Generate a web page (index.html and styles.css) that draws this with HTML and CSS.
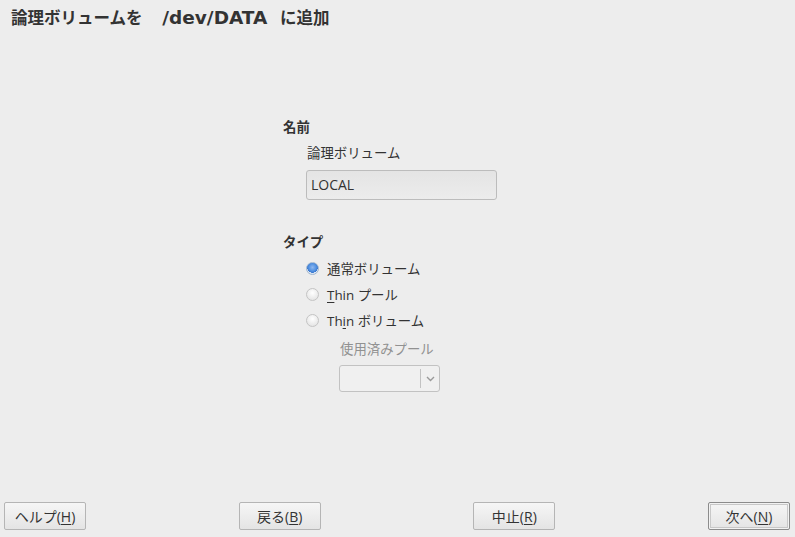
FILE: index.html
```html
<!DOCTYPE html>
<html lang="ja">
<head>
<meta charset="utf-8">
<title>論理ボリュームを /dev/DATA に追加</title>
<link rel="stylesheet" href="styles.css">
</head>
<body>
<div class="page">
  <h1 class="title">論理ボリュームを <span class="path">/dev/DATA</span> に追加</h1>
  <div class="form">
    <div class="section-label">名前</div>
    <div class="sub-label">論理ボリューム</div>
    <div class="text-input">LOCAL</div>
    <div class="section-label type-label">タイプ</div>
    <div class="radios">
      <div class="radio-row"><span class="radio checked"></span><span>通常ボリューム</span></div>
      <div class="radio-row"><span class="radio"></span><span><u>T</u>hin プール</span></div>
      <div class="radio-row"><span class="radio"></span><span>Th<u>i</u>n ボリューム</span></div>
    </div>
    <div class="pool-label">使用済みプール</div>
    <div class="combo"><span class="combo-field"></span><span class="combo-arrow"><svg width="9" height="6" viewBox="0 0 9 6"><path d="M1 1 L4.5 4.5 L8 1" fill="none" stroke="#9a9a9a" stroke-width="1.4"/></svg></span></div>
  </div>
  <div class="footer">
    <button class="btn">ヘルプ(<u>H</u>)</button>
    <button class="btn">戻る(<u>B</u>)</button>
    <button class="btn">中止(<u>R</u>)</button>
    <button class="btn default">次へ(<u>N</u>)</button>
  </div>
</div>
</body>
</html>
```
FILE: styles.css
```css
html, body {
  margin: 0;
  padding: 0;
  background: #ededed;
}
body {
  font-family: "Open Sans", "Noto Sans CJK JP", sans-serif;
  color: #333333;
  font-size: 13.4px;
}
.page {
  height: 537px;
  display: flex;
  flex-direction: column;
  box-sizing: border-box;
}
.title {
  margin: 0;
  padding: 7px 11px 0;
  font-family: "Noto Sans CJK JP", sans-serif;
  font-size: 16.5px;
  line-height: 21px;
  font-weight: bold;
  color: #333333;
  word-spacing: 9px;
  white-space: nowrap;
}
.title .path {
  margin-left: 7px;
  font-family: "DejaVu Sans", sans-serif;
  font-size: 18.5px;
  font-weight: bold;
  word-spacing: 0;
}
.form {
  margin-top: 91px;
  padding-left: 283px;
  display: flex;
  flex-direction: column;
  align-items: flex-start;
}
.section-label {
  font-weight: bold;
  line-height: 16px;
}
.sub-label {
  margin: 10px 0 0 24px;
  line-height: 16px;
}
.text-input {
  margin: 9px 0 0 23px;
  width: 191px;
  height: 30px;
  box-sizing: border-box;
  border: 1px solid #bcbcbc;
  border-radius: 3px;
  background: linear-gradient(#e4e4e4, #ececec);
  padding: 0 4px;
  line-height: 28px;
  font-size: 14px;
  color: #333333;
}
.type-label {
  margin-top: 34px;
}
.radios {
  margin: 5px 0 0 23px;
  display: flex;
  flex-direction: column;
}
.radio-row {
  height: 26px;
  display: flex;
  align-items: center;
  gap: 8px;
}
.radio {
  width: 13px;
  height: 13px;
  box-sizing: border-box;
  border-radius: 50%;
  border: 1px solid #c4c4c4;
  background: radial-gradient(circle at 50% 35%, #ffffff, #e8e8e8 70%, #dedede);
}
.radio.checked {
  border-color: #9fb6d0;
  background: radial-gradient(circle at 50% 40%, #8fb8ef 0%, #4f8fe0 45%, #3b78cf 60%, #dce6f2 64%, #f1f1f1 100%);
}
.pool-label {
  margin: 8px 0 0 57px;
  line-height: 16px;
  color: #919191;
}
.combo {
  margin: 8px 0 0 56px;
  width: 101px;
  height: 27px;
  box-sizing: border-box;
  border: 1px solid #c2c2c2;
  border-radius: 3px;
  background: #f0f0f0;
  display: flex;
  align-items: center;
}
.combo-field {
  flex: 1;
  height: 100%;
}
.combo-arrow {
  width: 18px;
  height: 19px;
  border-left: 1px solid #c2c2c2;
  display: flex;
  align-items: center;
  justify-content: center;
}
.footer {
  margin-top: auto;
  padding: 0 5px 7px 4px;
  display: flex;
  justify-content: space-between;
}
.btn {
  width: 82px;
  height: 28px;
  box-sizing: border-box;
  border: 1px solid #b5b5b5;
  border-radius: 2px;
  background: linear-gradient(#f6f6f6, #e4e4e4);
  font-family: "Open Sans", "Noto Sans CJK JP", sans-serif;
  font-size: 14px;
  color: #333333;
  padding: 0;
}
.btn.default {
  border: 1px solid #8c8c8c;
  box-shadow: inset 0 0 0 1px #f2f2f2, inset 0 0 0 2px #c8c8c8;
}
u {
  text-decoration: underline;
  text-underline-offset: 2px;
}
```
